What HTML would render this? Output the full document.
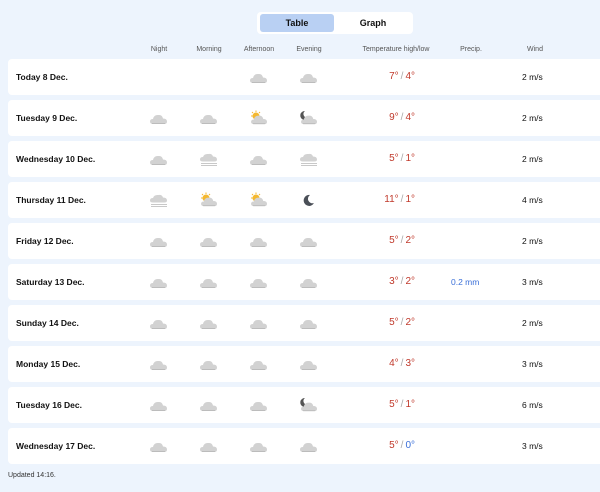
<!DOCTYPE html><html><head><style>
body{margin:0;width:600px;height:492px;background:#edf4fd;font-family:"Liberation Sans",sans-serif;position:relative;overflow:hidden}
.tg{position:absolute;left:257px;top:12px;width:156px;height:22px;background:#fff;border-radius:4px}
.tg div{position:absolute;top:2px;height:18px;line-height:18px;font-size:9px;font-weight:bold;text-align:center;color:#111}
.h{position:absolute;top:46px;font-size:7px;color:#555;transform:translateX(-50%)}
.r{position:absolute;left:8px;width:600px;height:36px;background:#fff;border-radius:4px}
.d{position:absolute;left:8px;top:0;line-height:36px;font-size:8.5px;font-weight:bold;color:#111}
.i{position:absolute;top:9px;width:20px;height:18px}
.t{position:absolute;right:193px;line-height:36px;font-size:10px;color:#c0392b}
.t span{color:#aaa;margin:0 2px}
.w{position:absolute;left:514px;line-height:36px;font-size:8.5px;color:#111}
.p{position:absolute;left:443px;line-height:36px;font-size:8.5px;color:#3a6fd8}
.u{position:absolute;left:8px;top:472px;font-size:7px;color:#333}
</style></head><body>
<svg width="0" height="0" style="position:absolute"><defs>
<symbol id="c" viewBox="0 0 20 16"><path d="M4 14 Q1 14 1 11.5 Q1 9 4 9 Q5 4.5 9.5 5 Q13 4.5 14 8.5 Q18 8.5 18 11.5 Q18 14 15.5 14 Z" fill="#d2d2d2"/><path d="M3 13.5 H16" stroke="#bcbcbc" stroke-width="1"/></symbol>
<symbol id="f" viewBox="0 0 20 16"><path d="M4 10.5 Q1 10.5 1 8.5 Q1 6 4 6 Q5 2.5 9.5 3 Q13 2.5 14 5.5 Q18 5.5 18 8.5 Q18 10.5 15.5 10.5 Z" fill="#d2d2d2"/><path d="M2 12.5 H18 M2 14.5 H18" stroke="#c8c8c8" stroke-width="1"/></symbol>
<symbol id="s" viewBox="0 0 20 16"><circle cx="7" cy="6" r="3.5" fill="#f4b830"/><path d="M7 0.5V2 M2 6H3.5 M3 2L4 3 M11 2L10 3" stroke="#f4b830" stroke-width="1"/><use href="#c" x="1" y="1" width="19" height="15"/></symbol>
<symbol id="m" viewBox="0 0 20 16"><path d="M6 1 A4.5 4.5 0 1 0 10 7 A3.5 3.5 0 0 1 6 1Z" fill="#555"/><use href="#c" x="1" y="1" width="19" height="15"/></symbol>
<symbol id="n" viewBox="0 0 20 16"><path d="M11 3 A5.5 5.5 0 1 0 15 11 A4.5 4.5 0 0 1 11 3Z" fill="#4a4f57"/></symbol>
</defs></svg>
<div class="tg"><div style="left:3px;width:74px;background:#b9d0f3;border-radius:3px">Table</div><div style="left:79px;width:74px">Graph</div></div>
<div class="h" style="left:159px">Night</div><div class="h" style="left:209px">Morning</div><div class="h" style="left:259px">Afternoon</div><div class="h" style="left:309px">Evening</div><div class="h" style="left:396px">Temperature high/low</div><div class="h" style="left:471px">Precip.</div><div class="h" style="left:535px">Wind</div>
<div id="rows"></div>
<div class="u">Updated 14:16.</div>
<script>
var R=[["Today 8 Dec.","--cc",7,4,"",2],["Tuesday 9 Dec.","ccsm",9,4,"",2],["Wednesday 10 Dec.","cfcf",5,1,"",2],["Thursday 11 Dec.","fssn",11,1,"",4],["Friday 12 Dec.","cccc",5,2,"",2],["Saturday 13 Dec.","cccc",3,2,"0.2 mm",3],["Sunday 14 Dec.","cccc",5,2,"",2],["Monday 15 Dec.","cccc",4,3,"",3],["Tuesday 16 Dec.","cccm",5,1,"",6],["Wednesday 17 Dec.","cccc",5,0,"",3]];
var h="";R.forEach(function(r,k){h+='<div class="r" style="top:'+(59+k*41)+'px"><div class="d">'+r[0]+'</div>';
for(var j=0;j<4;j++){var c=r[1][j];if(c!="-")h+='<svg class="i" viewBox="0 0 20 16" style="left:'+(141+j*50)+'px"><use href="#'+c+'" width="20" height="16"/></svg>';}
h+='<div class="t">'+r[2]+'°<span>/</span><b style="font-weight:normal;color:'+(r[3]<=0?'#3a6fd8':'#c0392b')+'">'+r[3]+'°</b></div>';
if(r[4])h+='<div class="p">'+r[4]+'</div>';
h+='<div class="w">'+r[5]+' m/s</div></div>';});
document.getElementById("rows").innerHTML=h;
</script>
</body></html>
